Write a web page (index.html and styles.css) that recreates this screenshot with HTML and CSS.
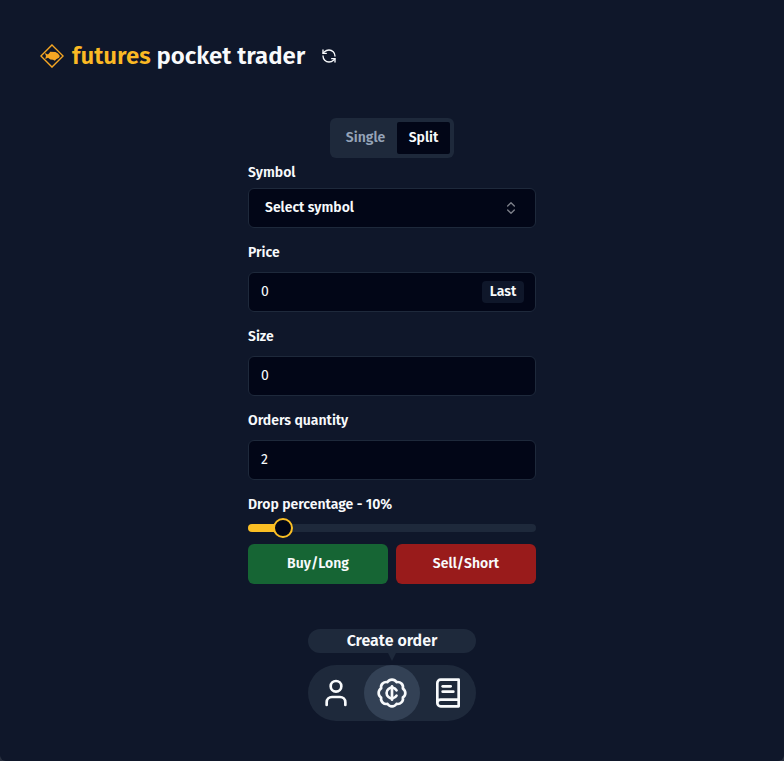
FILE: index.html
```html
<!DOCTYPE html>
<html lang="en">
<head>
<meta charset="utf-8">
<title>futures pocket trader</title>
<link rel="stylesheet" href="styles.css">
</head>
<body>
<div class="app">
  <header class="header">
    <svg class="logo" viewBox="0 0 24 24"><path d="M12 .9 23.1 12 12 23.1.9 12Z" fill="none" stroke="currentColor" stroke-width="1.4"/><path d="M4.8 9 8 10.4 9.6 8.7 10.2 7.7 15.5 8.1 18 9.5 19.8 12 19 13.8 16.2 15.3 14.8 16.8 13 15.8 10.4 15.6 8 13.8 5.2 15 6 12Z" fill="currentColor"/></svg>
    <h1 class="title"><span class="accent">futures</span> pocket trader</h1>
    <svg class="icon refresh" viewBox="0 0 24 24"><path d="M21 12a9 9 0 0 0-9-9 9.75 9.75 0 0 0-6.74 2.74L3 8"/><path d="M3 3v5h5"/><path d="M3 12a9 9 0 0 0 9 9 9.75 9.75 0 0 0 6.74-2.74L21 16"/><path d="M16 16h5v5"/></svg>
  </header>
  <main class="form">
    <div class="tabs"><button class="tab">Single</button><button class="tab active">Split</button></div>
    <div class="label first">Symbol</div>
    <button class="field select"><span>Select symbol</span><svg class="icon chevrons" viewBox="0 0 24 24"><path d="m7 15 5 5 5-5"/><path d="m7 9 5-5 5 5"/></svg></button>
    <div class="label">Price</div>
    <div class="field"><span>0</span><button class="last">Last</button></div>
    <div class="label">Size</div>
    <div class="field"><span>0</span></div>
    <div class="label">Orders quantity</div>
    <div class="field"><span>2</span></div>
    <div class="label">Drop percentage - 10%</div>
    <div class="slider"><div class="range"></div><div class="thumb"></div></div>
    <div class="actions"><button class="action buy">Buy/Long</button><button class="action sell">Sell/Short</button></div>
  </main>
  <footer class="dock">
    <div class="bubble">Create order</div>
    <div class="arrow"></div>
    <nav class="nav">
      <button class="nav-item"><svg class="icon" viewBox="0 0 24 24"><circle cx="12" cy="7" r="4"/><path d="M19 21v-2a4 4 0 0 0-4-4H9a4 4 0 0 0-4 4v2"/></svg></button>
      <button class="nav-item current"><svg class="icon" viewBox="0 0 24 24"><path d="M3.85 8.62a4 4 0 0 1 4.78-4.77 4 4 0 0 1 6.74 0 4 4 0 0 1 4.78 4.78 4 4 0 0 1 0 6.74 4 4 0 0 1-4.77 4.78 4 4 0 0 1-6.75 0 4 4 0 0 1-4.78-4.77 4 4 0 0 1 0-6.76Z"/><path d="M12 7v10"/><path d="M15.4 10a4 4 0 1 0 0 4"/></svg></button>
      <button class="nav-item"><svg class="icon" viewBox="0 0 24 24"><path d="M4 19.5v-15A2.5 2.5 0 0 1 6.5 2H20v20H6.5a2.5 2.5 0 0 1 0-5H20"/><path d="M8 7h6"/><path d="M8 11h8"/></svg></button>
    </nav>
  </footer>
</div>
</body>
</html>
```
FILE: styles.css
```css
* { box-sizing: border-box; }
html { background: #29303f; }
body { margin: 0; color: #f8fafc; font-family: "Fira Sans", "Noto Sans", sans-serif; font-size: 14px; }
button { margin: 0; padding: 0; border: 0; background: none; color: inherit; font: inherit; }
h1 { margin: 0; }
.app { height: 761px; display: flex; flex-direction: column; align-items: center; background: #0f172a; border-radius: 0 0 6px 6px; overflow: hidden; }
.icon { fill: none; stroke: currentColor; stroke-width: 2; stroke-linecap: round; stroke-linejoin: round; flex: none; }
.header { width: 100%; height: 78px; padding: 34px 40px 0; display: flex; align-items: center; }
.logo { width: 24px; height: 24px; color: #f5a623; flex: none; }
.title { width: 249px; margin-left: 8px; font-size: 24px; line-height: 32px; font-weight: 600; white-space: nowrap; }
.accent { color: #fbb924; }
.refresh { width: 16px; height: 16px; }
.form { width: 288px; margin-top: 40px; display: flex; flex-direction: column; font-weight: 600; white-space: nowrap; }
.tabs { align-self: center; width: 124px; height: 40px; padding: 4px; display: flex; border-radius: 6px; background: #1e293b; color: #94a3b8; }
.tab { width: 63px; height: 32px; border-radius: 2px; line-height: 20px; }
.tab.active { width: 53px; background: #020617; color: #f8fafc; }
.label { height: 14px; margin: 18px 0 12px; line-height: 14px; }
.label.first { margin: 8px 0 8px; }
.field { height: 40px; margin: 0; padding: 0 11px 2px 12px; display: flex; align-items: center; justify-content: space-between; border: 1px solid #1e293b; border-radius: 6px; background: #020617; font-weight: 400; }
.select { padding: 0 16px 2px; font-weight: 600; }
.chevrons { width: 16px; height: 16px; opacity: .5; position: relative; top: 1px; }
.last { width: 42px; height: 22px; margin-top: 2px; border-radius: 4px; background: #0f172a; font-weight: 600; line-height: 20px; }
.slider { position: relative; height: 8px; border-radius: 4px; background: #1e293b; }
.range { width: 35px; height: 8px; border-radius: 4px 0 0 4px; background: #fbbf24; }
.thumb { position: absolute; left: 25px; top: -6px; width: 20px; height: 20px; border: 2px solid #fbbf24; border-radius: 50%; background: #020617; }
.actions { margin-top: 12px; display: flex; gap: 8px; }
.action { width: 140px; height: 40px; padding-bottom: 2px; border-radius: 6px; }
.buy { background: #166534; }
.sell { background: #991b1b; }
.dock { width: 168px; margin-top: 45px; display: flex; flex-direction: column; align-items: center; }
.bubble { width: 168px; height: 24px; border-radius: 12px; background: #1e293b; font-size: 16px; line-height: 24px; font-weight: 600; text-align: center; }
.arrow { height: 12px; border: solid transparent; border-width: 8px 4px 0; border-top-color: #1e293b; }
.nav { display: flex; border-radius: 28px; background: #1e293b; }
.nav-item { width: 56px; height: 56px; display: flex; align-items: center; justify-content: center; border-radius: 50%; }
.nav-item .icon { width: 32px; height: 32px; }
.current { background: #334155; }
```
